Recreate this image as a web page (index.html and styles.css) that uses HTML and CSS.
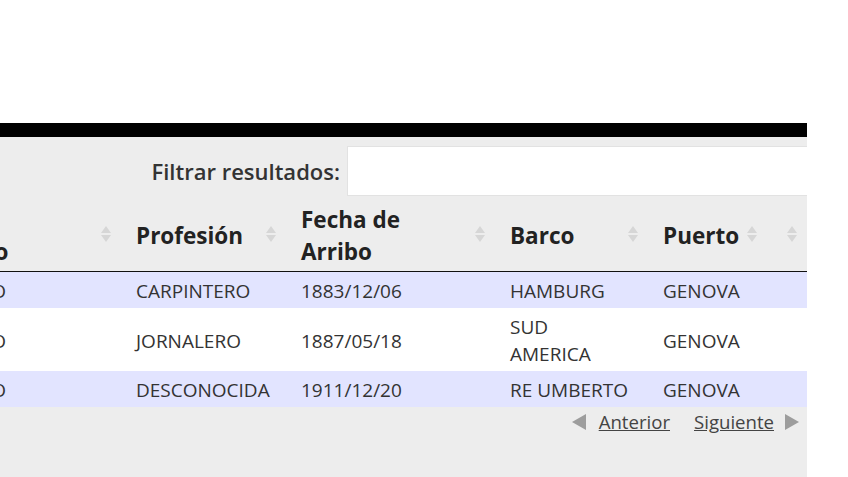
FILE: index.html
```html
<!DOCTYPE html>
<html lang="es">
<head>
  <meta charset="UTF-8">
  <title>Pasajeros</title>
  <link rel="stylesheet" href="styles.css">
</head>
<body>
  <div class="page">
    <div class="topbar"></div>
    <div class="panel">
      <div class="filter">
        <label for="buscar">Filtrar resultados:</label>
        <input type="text" id="buscar">
      </div>

      <div class="table-wrap">
        <table class="results">
          <thead>
            <tr>
              <th class="c-origen">Lugar<br>Destino</th>
              <th class="c-prof">Profesión</th>
              <th class="c-fecha">Fecha de<br>Arribo</th>
              <th class="c-barco">Barco</th>
              <th class="c-puerto">Puerto</th>
              <th class="c-extra"></th>
            </tr>
          </thead>
          <tbody>
            <tr class="odd">
              <td>ITALIANO</td>
              <td>CARPINTERO</td>
              <td>1883/12/06</td>
              <td>HAMBURG</td>
              <td>GENOVA</td>
              <td></td>
            </tr>
            <tr class="even">
              <td>ITALIANO</td>
              <td>JORNALERO</td>
              <td>1887/05/18</td>
              <td>SUD<br>AMERICA</td>
              <td>GENOVA</td>
              <td></td>
            </tr>
            <tr class="odd">
              <td>ITALIANO</td>
              <td>DESCONOCIDA</td>
              <td>1911/12/20</td>
              <td>RE UMBERTO</td>
              <td>GENOVA</td>
              <td></td>
            </tr>
          </tbody>
        </table>
      </div>

      <div class="paging">
        <span class="arrow prev"></span>
        <a href="#">Anterior</a>
        <a href="#">Siguiente</a>
        <span class="arrow next"></span>
      </div>
    </div>
  </div>
</body>
</html>
```

FILE: styles.css
```css
body {
  margin: 0;
  background: #fff;
  font-family: "Open Sans", "Noto Sans", sans-serif;
  color: #333;
}
.page {
  padding-top: 123px;
  width: 807px;
}
.topbar {
  height: 14px;
  background: #000;
}
.panel {
  background: #ededed;
  height: 340px;
  overflow: hidden;
}
.filter {
  display: flex;
  justify-content: flex-end;
  align-items: center;
  padding-top: 9px;
  margin-bottom: 1px;
}
.filter label {
  font-size: 22px;
  font-weight: 600;
  color: #333;
  margin-right: 7px;
}
.filter input {
  box-sizing: border-box;
  width: 460px;
  height: 50px;
  border: 1px solid #e2e2e2;
  border-right: none;
  background: #fff;
  margin: 0;
}
.table-wrap {
  overflow: hidden;
}
.results {
  border-collapse: collapse;
  table-layout: fixed;
  width: 900px;
  margin-left: -88px;
}
.results th {
  position: relative;
  box-sizing: border-box;
  padding: 7px 30px 3px 10px;
  text-align: left;
  vertical-align: middle;
  font-size: 22.5px;
  line-height: 32px;
  font-weight: bold;
  color: #222;
  border-bottom: 1px solid #111;
}
.results th::before,
.results th::after {
  content: "";
  position: absolute;
  right: 15px;
  top: 50%;
  border-left: 5px solid transparent;
  border-right: 5px solid transparent;
}
.results th::before {
  margin-top: -8px;
  border-bottom: 7px solid #d6d6d6;
}
.results th::after {
  margin-top: 1px;
  border-top: 7px solid #d6d6d6;
}
.c-origen { width: 214px; }
.c-prof { width: 165px; }
.c-fecha { width: 209px; }
.c-barco { width: 153px; }
.c-puerto { width: 119px; }
.c-extra { width: 40px; }
.results td {
  padding: 6px 10px 3px;
  font-size: 19px;
  line-height: 27px;
  vertical-align: middle;
  color: #333;
}
.results tr.odd td {
  background: #e2e4ff;
}
.results tr.even td {
  background: #fff;
}
.paging {
  display: flex;
  justify-content: flex-end;
  align-items: center;
  padding: 1px 8px 0 0;
  font-size: 18.6px;
  line-height: 27px;
}
.paging a {
  color: #444;
  text-decoration: underline;
}
.paging a + a {
  margin-left: 24px;
}
.arrow {
  width: 0;
  height: 0;
  border-top: 8px solid transparent;
  border-bottom: 8px solid transparent;
}
.arrow.prev {
  border-right: 14px solid #9d9d9d;
  margin-right: 13px;
}
.arrow.next {
  border-left: 14px solid #9d9d9d;
  margin-left: 11px;
}
```
